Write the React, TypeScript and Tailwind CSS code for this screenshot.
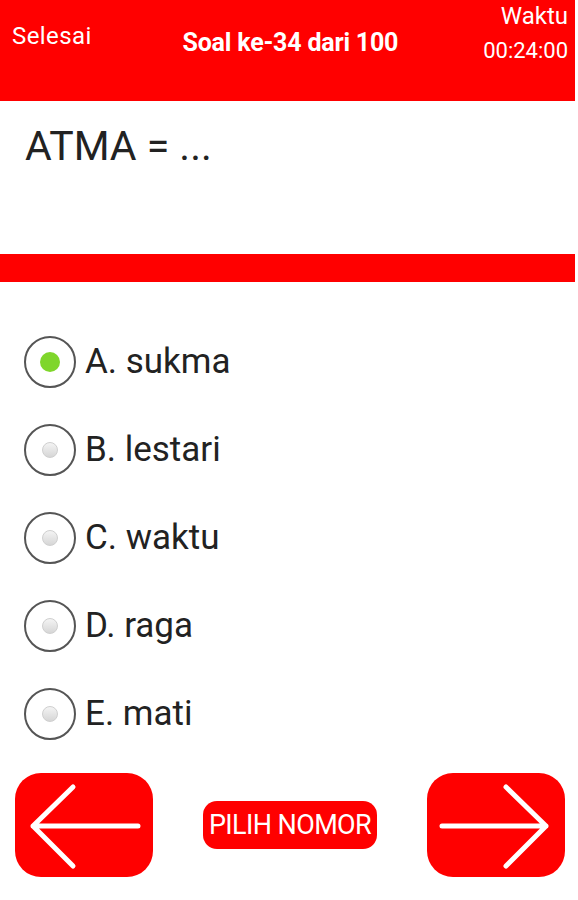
import { useState } from "react";

const options = ["A. sukma", "B. lestari", "C. waktu", "D. raga", "E. mati"];

const Radio = ({ checked }: { checked: boolean }) => (
  <span className="flex items-center justify-center w-[52px] h-[52px] rounded-full border-2 border-[#555] bg-white shrink-0">
    {checked ? (
      <span className="w-[20px] h-[20px] rounded-full bg-[#7fd62b]" />
    ) : (
      <span className="w-[16px] h-[16px] rounded-full border border-[#cfcfcf] bg-gradient-to-b from-[#f4f4f4] to-[#d6d6d6]" />
    )}
  </span>
);

const Arrow = ({ dir }: { dir: "left" | "right" }) => (
  <svg width="138" height="104" viewBox="0 0 138 104">
    {dir === "left" ? (
      <path
        d="M123 53H18M58 14L18 53L58 93"
        fill="none"
        stroke="#fff"
        strokeWidth="5"
        strokeLinecap="round"
        strokeLinejoin="round"
      />
    ) : (
      <path
        d="M15 53H119M79 14L119 53L79 93"
        fill="none"
        stroke="#fff"
        strokeWidth="5"
        strokeLinecap="round"
        strokeLinejoin="round"
      />
    )}
  </svg>
);

export default function App() {
  const [answer, setAnswer] = useState<number>(0);

  return (
    <div className="w-[578px] h-[900px] bg-white font-['Roboto',sans-serif] overflow-hidden">
      <div className="w-[575px]">
        {/* Header */}
        <div className="flex justify-between h-[101px] bg-[#ff0000] text-white pl-3 pr-[7px]">
          <div className="pt-[21px] text-[24px] leading-[30px] tracking-[0.4px]">Selesai</div>
          <div className="pt-[28px] pl-[6px] text-[25px] leading-[30px] font-bold tracking-[-0.2px]">
            Soal ke-34 dari 100
          </div>
          <div className="flex flex-col items-end pt-[1px] text-[24px] leading-[30px]">
            <span>Waktu</span>
            <span className="mt-[5px] text-[22px]">00:24:00</span>
          </div>
        </div>

        {/* Question */}
        <div className="h-[153px] pl-[25px] pt-[21px] text-[41px] leading-[48px] text-[#222]">
          ATMA = ...
        </div>
        <div className="h-[28px] bg-[#ff0000]" />

        {/* Options */}
        <div className="flex flex-col pt-[36px]">
          {options.map((opt, idx) => (
            <button
              key={opt}
              onClick={() => setAnswer(idx)}
              className="flex items-center gap-[9px] h-[88px] pl-[24px] text-left"
            >
              <Radio checked={answer === idx} />
              <span className="text-[35px] leading-[40px] text-[#222]">{opt}</span>
            </button>
          ))}
        </div>

        {/* Navigation */}
        <div className="flex items-center justify-between mt-[15px] pl-[15px] pr-[10px]">
          <button className="w-[138px] h-[104px] rounded-[26px] bg-[#ff0000] flex items-center justify-center">
            <Arrow dir="left" />
          </button>
          <button className="w-[174px] h-[48px] rounded-[14px] bg-[#ff0000] text-white text-[27px] leading-[48px] tracking-[-0.6px]">
            PILIH NOMOR
          </button>
          <button className="w-[138px] h-[104px] rounded-[26px] bg-[#ff0000] flex items-center justify-center">
            <Arrow dir="right" />
          </button>
        </div>
      </div>
    </div>
  );
}
